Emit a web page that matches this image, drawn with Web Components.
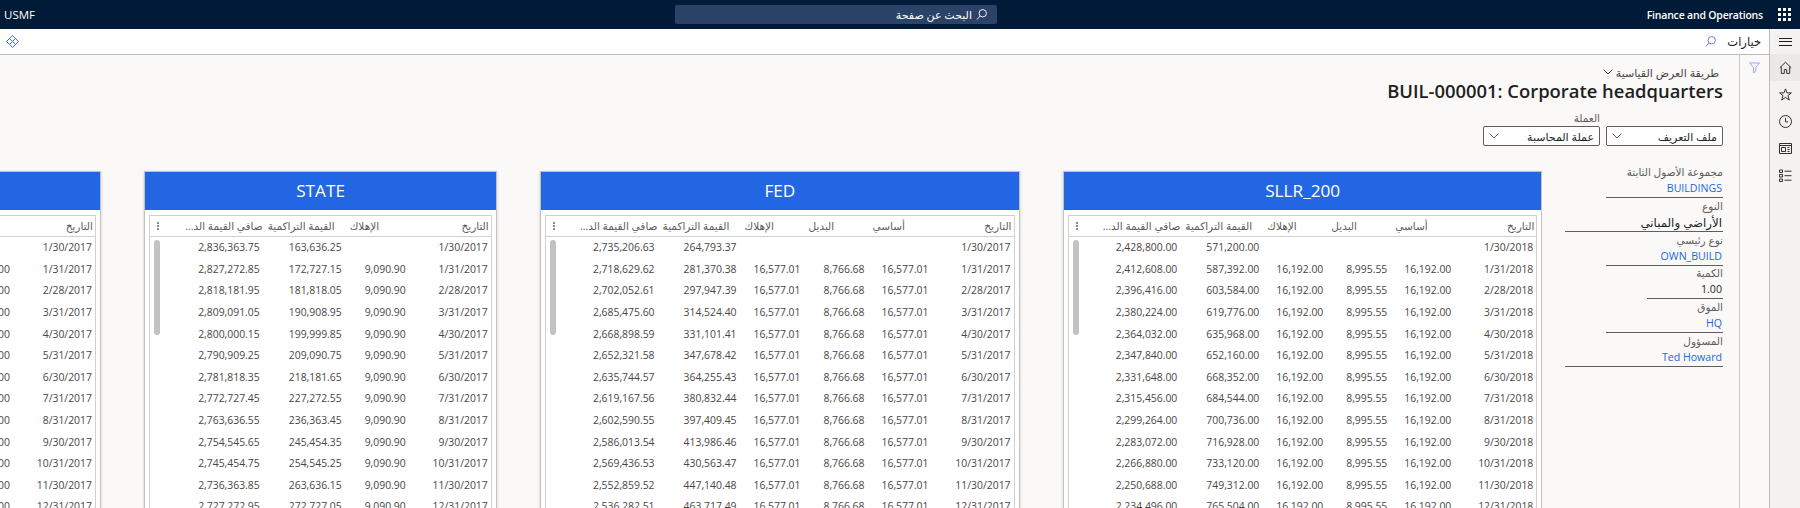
<!DOCTYPE html>
<html lang="ar">
<head>
<meta charset="utf-8">
<title>Finance and Operations</title>
<style>
  html, body { margin: 0; height: 508px; overflow: hidden; background: #faf9f8; }
  body {
    display: flex;
    flex-direction: column;
    font-family: "Open Sans", "Noto Sans", "DejaVu Sans", sans-serif;
    color: #201f1e;
  }
</style>
</head>
<body>
<fo-topbar></fo-topbar>
<fo-shell>
  <fo-rail slot="rail"></fo-rail>
  <fo-toolbar slot="toolbar"></fo-toolbar>
  <fo-filter slot="filter"></fo-filter>
  <fo-page-head slot="head"></fo-page-head>
  <fo-info slot="info">
    <fo-field label="مجموعة الأصول الثابتة" value="BUILDINGS" link size="117"></fo-field>
    <fo-field label="النوع" value="الأراضي والمباني" arabic size="158"></fo-field>
    <fo-field label="نوع رئيسي" value="OWN_BUILD" link size="117"></fo-field>
    <fo-field label="الكمية" value="1.00" size="76"></fo-field>
    <fo-field label="الموق" value="HQ" link size="117"></fo-field>
    <fo-field label="المسؤول" value="Ted Howard" link size="158"></fo-field>
  </fo-info>
  <book-card slot="cards" name="SLLR_200" year="2018" net="2428800" acc="571200" dep="16192" base="16192" alt="8995.55" width="479.3"></book-card>
  <book-card slot="cards" name="FED" year="2017" net="2735206.63" acc="264793.37" dep="16577.01" base="16577.01" alt="8766.68" width="479.3"></book-card>
  <book-card slot="cards" name="STATE" year="2017" net="2836363.75" acc="163636.25" dep="9090.90" width="352.3"></book-card>
  <book-card slot="cards" name="" year="2017" net="2900000" acc="100000" dep="16000" base="16000" alt="8000" width="479.3"></book-card>
</fo-shell>

<script>
const ICONS = {
  search: '<path d="M4.3 7.7 1 11.5M7.3 8.6a4 4 0 1 0 0-8 4 4 0 0 0 0 8Z"/>',
  funnel: '<path d="M.7 1h10.6L7.2 6v4.6L4.8 11.6V6Z"/>',
  home: '<path d="M.8 6.8 6.5 1.2l5.7 5.6M2.3 5.6v6.8h3V8.6h2.4v3.8h3V5.6"/>',
  star: '<path d="m6.5.9 1.6 4h4.3L9 7.6l1.3 4.5-3.8-2.7-3.8 2.7L4 7.6.6 4.9h4.3Z"/>',
  clock: '<circle cx="6.5" cy="6.5" r="6"/><path d="M6.5 2.8v4h2.6"/>',
  space: '<path d="M.5 1.5h12v10H.5ZM.5 3.5h12M2.5 5.5h4v4h-4ZM8.5 5.5h2M8.5 7.5h2M8.5 9.5h2"/>',
  list: '<path d="M.5 1h3v2.5h-3ZM.5 5.5h3V8h-3ZM.5 10h3v2.5h-3ZM5.5 2.2h7M5.5 6.7h7M5.5 11.2h7"/>',
  diamond: '<path d="M6.5.5 12.5 6.5 6.5 12.5.5 6.5ZM3.5 3.5l6 6M9.5 3.5l-6 6"/>',
};

function icon(name, size, color) {
  return `<svg width="${size}" height="${size}" viewBox="0 0 13 13" fill="none" stroke="${color}" stroke-width="1" aria-hidden="true">${ICONS[name]}</svg>`;
}

const chevron = (color) =>
  `<svg width="10" height="6" viewBox="0 0 10 6" fill="none" stroke="${color}" aria-hidden="true"><path d="M.5.5 5 5l4.5-4.5"/></svg>`;

class FoTopbar extends HTMLElement {
  constructor() {
    super();
    this.attachShadow({ mode: "open" });
    this.shadowRoot.innerHTML = `
      <style>
        :host { display: grid; grid-template-columns: 675px 322px 1fr; align-items: center; height: 29px; background: #001a38; color: #fff; font-size: 11.5px; flex: none; }
        .company { padding-left: 4px; }
        .search { display: flex; justify-content: flex-end; align-items: center; gap: 4px; height: 19px; padding-right: 9px; background: #2b4369; border-radius: 2px; font-size: 11px; }
        .app { display: flex; justify-content: flex-end; align-items: center; gap: 15px; padding-right: 9px; font-weight: 600; font-size: 10.5px; letter-spacing: -.2px; }
        .waffle { display: grid; grid-template-columns: repeat(3, 3px); gap: 2px; }
        .waffle i { width: 3px; height: 3px; background: #fff; }
      </style>
      <div class="company">USMF</div>
      <div class="search"><span dir="rtl">البحث عن صفحة</span>${icon("search", 12, "#fff")}</div>
      <div class="app"><span>Finance and Operations</span><div class="waffle">${"<i></i>".repeat(9)}</div></div>
    `;
  }
}

// page frame: rail on the far right, toolbar on top, then the filter strip and the content
class FoShell extends HTMLElement {
  constructor() {
    super();
    this.attachShadow({ mode: "open" });
    this.shadowRoot.innerHTML = `
      <style>
        :host { display: flex; flex-direction: row-reverse; flex: 1; min-height: 0; }
        .main { flex: 1; min-width: 0; display: flex; flex-direction: column; }
        .under { flex: 1; min-height: 0; display: flex; flex-direction: row-reverse; }
        .content { flex: 1; min-width: 0; display: flex; flex-direction: column; padding-right: 16px; }
        .body { flex: 1; min-height: 0; display: flex; flex-direction: row-reverse; gap: 22.7px; margin-top: 19px; }
        .cards { flex: 1; min-width: 0; display: flex; flex-direction: row-reverse; gap: 43.5px; padding-top: 6px; overflow: hidden; }
      </style>
      <slot name="rail"></slot>
      <div class="main">
        <slot name="toolbar"></slot>
        <div class="under">
          <slot name="filter"></slot>
          <div class="content">
            <slot name="head"></slot>
            <div class="body">
              <slot name="info"></slot>
              <div class="cards"><slot name="cards"></slot></div>
            </div>
          </div>
        </div>
      </div>
    `;
  }
}

class FoRail extends HTMLElement {
  constructor() {
    super();
    this.attachShadow({ mode: "open" });
    const items = ["home", "star", "clock", "space", "list"]
      .map((n) => `<div class="tile ${n === "home" ? "on" : ""}">${icon(n, 13, "#323130")}</div>`)
      .join("");
    this.shadowRoot.innerHTML = `
      <style>
        :host { display: block; width: 30px; flex: none; background: #f3f2f1; border-left: 1px solid #bdbbb8; }
        .menu { height: 25px; display: flex; flex-direction: column; justify-content: center; align-items: center; gap: 2.5px; }
        .menu i { width: 13px; height: 1px; background: #201f1e; }
        .tile { height: 27px; display: flex; align-items: center; justify-content: center; }
        .on { background: #ebe9e7; }
      </style>
      <div class="menu"><i></i><i></i><i></i></div>
      ${items}
    `;
  }
}

class FoToolbar extends HTMLElement {
  constructor() {
    super();
    this.attachShadow({ mode: "open" });
    this.shadowRoot.innerHTML = `
      <style>
        :host { display: flex; flex-direction: row-reverse; align-items: center; justify-content: space-between; height: 25px; background: #fff; border-bottom: 1px solid #bdbbb8; flex: none; }
        .right { display: flex; flex-direction: row-reverse; align-items: center; gap: 10px; padding-right: 8px; }
        .label { font-size: 11.5px; }
        .left { display: flex; padding-left: 6px; }
      </style>
      <div class="right"><span class="label" dir="rtl">خيارات</span>${icon("search", 12, "#5b74e6")}</div>
      <div class="left">${icon("diamond", 13, "#3b6cea")}</div>
    `;
  }
}

class FoFilter extends HTMLElement {
  constructor() {
    super();
    this.attachShadow({ mode: "open" });
    this.shadowRoot.innerHTML = `
      <style>
        :host { display: flex; justify-content: center; width: 29px; flex: none; padding-top: 7px; border-left: 1px solid #c8c6c4; box-sizing: content-box; }
      </style>
      ${icon("funnel", 12, "#8ea0f2")}
    `;
  }
}

class FoPageHead extends HTMLElement {
  constructor() {
    super();
    this.attachShadow({ mode: "open" });
    this.shadowRoot.innerHTML = `
      <style>
        :host { display: flex; flex-direction: column; align-items: flex-end; padding-top: 9px; flex: none; }
        .view { display: flex; flex-direction: row-reverse; align-items: center; gap: 3px; height: 16px; padding-right: 4px; font-size: 11px; color: #484644; }
        h1 { margin: 0; font-size: 18.4px; line-height: 22px; font-weight: 600; color: #201f1e; white-space: nowrap; }
        .pick { display: flex; flex-direction: row-reverse; align-items: flex-end; gap: 6px; margin-top: 9px; }
      </style>
      <div class="view"><span dir="rtl">طريقة العرض القياسية</span>${chevron("#484644")}</div>
      <h1>BUIL-000001: Corporate headquarters</h1>
      <div class="pick">
        <fo-dropdown value="ملف التعريف"></fo-dropdown>
        <fo-dropdown label="العملة" value="عملة المحاسبة"></fo-dropdown>
      </div>
    `;
  }
}

class FoDropdown extends HTMLElement {
  constructor() {
    super();
    this.attachShadow({ mode: "open" });
  }
  connectedCallback() {
    const label = this.getAttribute("label");
    this.shadowRoot.innerHTML = `
      <style>
        :host { display: block; width: 117px; }
        .label { height: 15px; line-height: 14px; font-size: 10.5px; color: #605e5c; text-align: right; }
        .box { display: flex; flex-direction: row-reverse; justify-content: space-between; align-items: center; box-sizing: border-box; height: 20px; padding: 0 5px; background: #fff; border: 1px solid #605e5c; border-radius: 2px; font-size: 11px; }
      </style>
      ${label ? `<div class="label" dir="rtl">${label}</div>` : ""}
      <div class="box"><span dir="rtl">${this.getAttribute("value")}</span>${chevron("#605e5c")}</div>
    `;
  }
}

class FoInfo extends HTMLElement {
  constructor() {
    super();
    this.attachShadow({ mode: "open" });
    this.shadowRoot.innerHTML = `
      <style>:host { display: flex; flex-direction: column; align-items: flex-end; width: 158px; flex: none; }</style>
      <slot></slot>
    `;
  }
}

class FoField extends HTMLElement {
  constructor() {
    super();
    this.attachShadow({ mode: "open" });
  }
  connectedCallback() {
    const link = this.hasAttribute("link");
    const size = this.hasAttribute("arabic") ? 11.8 : 10.6;
    this.shadowRoot.innerHTML = `
      <style>
        :host { display: block; height: 33.8px; width: ${this.getAttribute("size")}px; text-align: right; }
        .label { height: 14px; line-height: 14px; font-size: 10.5px; color: #605e5c; white-space: nowrap; }
        .value { box-sizing: border-box; height: 19px; line-height: 19px; padding-right: 1px; font-size: ${size}px; border-bottom: 1px solid #605e5c; color: ${link ? "#2266e3" : "#201f1e"}; white-space: nowrap; }
      </style>
      <div class="label" dir="rtl">${this.getAttribute("label")}</div>
      <div class="value" dir="rtl">${this.getAttribute("value")}</div>
    `;
  }
}

const MONTH_ENDS = [30, 31, 28, 31, 30, 31, 30, 31, 31, 30, 31, 30, 31];

function money(cents) {
  return (cents / 100).toLocaleString("en-US", { minimumFractionDigits: 2, maximumFractionDigits: 2 });
}

class BookCard extends HTMLElement {
  constructor() {
    super();
    this.attachShadow({ mode: "open" });
  }

  connectedCallback() {
    const cents = (name) => Math.round(parseFloat(this.getAttribute(name)) * 100);
    const hasBase = this.hasAttribute("base");
    const year = this.getAttribute("year");

    const head = ["التاريخ"]
      .concat(hasBase ? ["أساسي", "البديل"] : [])
      .concat(["الإهلاك", "القيمة التراكمية", "صافي القيمة الد..."]);
    const cols = hasBase ? "82px 64px 64px 64px 82px 82px 1fr" : "82px 64px 82px 82px 1fr";

    let rows = "";
    MONTH_ENDS.forEach((day, i) => {
      const month = i === 0 ? 1 : i;
      const cells = [`${month}/${day}/${year}`];
      if (hasBase) {
        cells.push(i ? money(cents("base")) : "", i ? money(cents("alt")) : "");
      }
      cells.push(i ? money(cents("dep")) : "");
      cells.push(money(cents("acc") + i * cents("dep")));
      cells.push(money(cents("net") - i * cents("dep")));
      rows += `<div class="row">${cells.map((c) => `<div class="cell">${c}</div>`).join("")}</div>`;
    });

    this.shadowRoot.innerHTML = `
      <style>
        :host { display: block; flex: none; box-sizing: border-box; width: ${this.getAttribute("width")}px; height: 420px; background: #fff; border: 1px solid #c4c2c0; box-shadow: 0 1px 3px rgba(0,0,0,.18); --cols: ${cols}; }
        .title { height: 38px; line-height: 38px; background: #2266e3; color: #fff; text-align: center; font-size: 17.2px; white-space: nowrap; overflow: hidden; }
        .grid { position: relative; margin: 5px 4px 0; border: 1px solid #d2d0ce; height: 400px; direction: rtl; }
        .row, .headrow { display: grid; grid-template-columns: var(--cols); align-items: center; }
        .headrow { height: 20px; border-bottom: 1px solid #d2d0ce; font-size: 10.5px; color: #605e5c; }
        .headrow span { white-space: nowrap; text-align: left; padding-left: 5px; }
        .headrow span:first-child { text-align: right; padding: 0 2px 0 0; }
        .row { box-sizing: border-box; height: 21.6px; padding-bottom: 1px; font-size: 10.4px; color: #484644; }
        .cell { direction: ltr; text-align: right; padding-right: 3px; white-space: nowrap; }
        .dots { display: flex; flex-direction: column; gap: 1.5px; margin-right: auto; margin-left: 7px; width: 1.5px; }
        .dots i { width: 1.5px; height: 1.5px; background: #8a8886; }
        /* overlay scrollbar sits on top of the rows */
        .thumb { position: absolute; left: 4px; top: 24px; width: 6px; height: 95px; background: #c2c2c2; border-radius: 3px; }
      </style>
      <div class="title">${this.getAttribute("name")}</div>
      <div class="grid">
        <div class="headrow">
          ${head.map((h) => `<span>${h}</span>`).join("")}
          <div class="dots"><i></i><i></i><i></i></div>
        </div>
        ${rows}
        <div class="thumb"></div>
      </div>
    `;
  }
}

customElements.define("fo-topbar", FoTopbar);
customElements.define("fo-shell", FoShell);
customElements.define("fo-rail", FoRail);
customElements.define("fo-toolbar", FoToolbar);
customElements.define("fo-filter", FoFilter);
customElements.define("fo-page-head", FoPageHead);
customElements.define("fo-dropdown", FoDropdown);
customElements.define("fo-info", FoInfo);
customElements.define("fo-field", FoField);
customElements.define("book-card", BookCard);
</script>
</body>
</html>
